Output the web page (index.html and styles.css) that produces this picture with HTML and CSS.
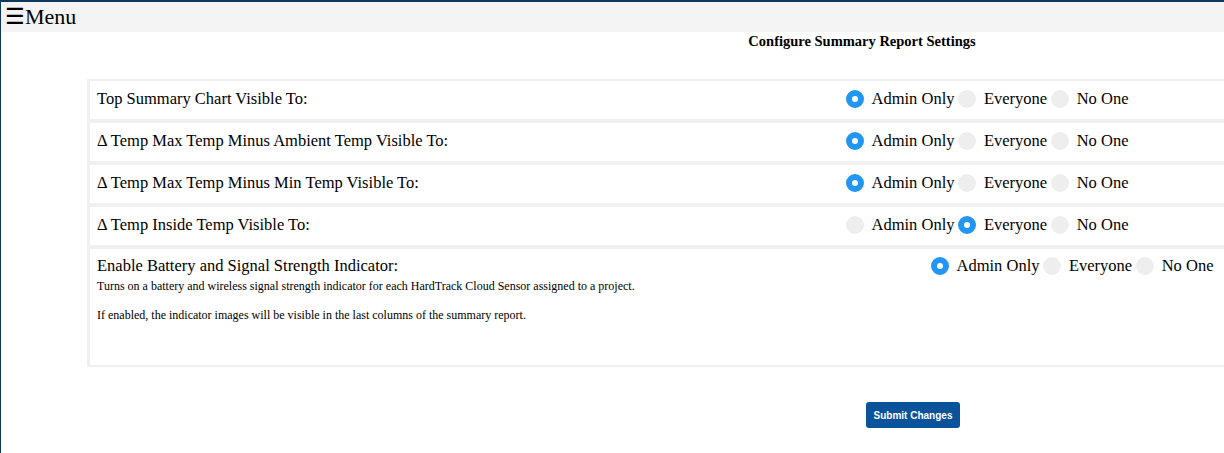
FILE: index.html
```html
<!DOCTYPE html>
<html>
<head>
<meta charset="utf-8">
<link rel="stylesheet" href="styles.css">
</head>
<body>
<div class="page">
  <div class="topbar"><span class="menu">☰Menu</span></div>
  <div class="content">
    <h3 class="title">Configure Summary Report Settings</h3>
    <div class="rows">
      <div class="row">
        <div class="label">Top Summary Chart Visible To:</div>
        <div class="opts">
          <span class="opt"><span class="dot on"></span>Admin Only</span>
          <span class="opt"><span class="dot"></span>Everyone</span>
          <span class="opt"><span class="dot"></span>No One</span>
        </div>
      </div>
      <div class="row">
        <div class="label">Δ Temp Max Temp Minus Ambient Temp Visible To:</div>
        <div class="opts">
          <span class="opt"><span class="dot on"></span>Admin Only</span>
          <span class="opt"><span class="dot"></span>Everyone</span>
          <span class="opt"><span class="dot"></span>No One</span>
        </div>
      </div>
      <div class="row">
        <div class="label">Δ Temp Max Temp Minus Min Temp Visible To:</div>
        <div class="opts">
          <span class="opt"><span class="dot on"></span>Admin Only</span>
          <span class="opt"><span class="dot"></span>Everyone</span>
          <span class="opt"><span class="dot"></span>No One</span>
        </div>
      </div>
      <div class="row">
        <div class="label">Δ Temp Inside Temp Visible To:</div>
        <div class="opts">
          <span class="opt"><span class="dot"></span>Admin Only</span>
          <span class="opt"><span class="dot on"></span>Everyone</span>
          <span class="opt"><span class="dot"></span>No One</span>
        </div>
      </div>
      <div class="row row-tall">
        <div class="label wide">
          <div>Enable Battery and Signal Strength Indicator:</div>
          <p class="desc">Turns on a battery and wireless signal strength indicator for each HardTrack Cloud Sensor assigned to a project.</p>
          <p class="desc">If enabled, the indicator images will be visible in the last columns of the summary report.</p>
        </div>
        <div class="opts">
          <span class="opt"><span class="dot on"></span>Admin Only</span>
          <span class="opt"><span class="dot"></span>Everyone</span>
          <span class="opt"><span class="dot"></span>No One</span>
        </div>
      </div>
    </div>
    <div class="actions">
      <button class="submit">Submit Changes</button>
    </div>
  </div>
</div>
</body>
</html>
```

FILE: styles.css
```css
html, body {
  margin: 0;
  padding: 0;
  overflow: hidden;
  background: #fff;
}
body {
  font-family: "Liberation Serif", "Times New Roman", serif;
  color: #000;
}
.page {
  border-top: 2px solid #0d3a5c;
  border-left: 1px solid #0d3a5c;
  height: 451px;
}
.topbar {
  background: #f4f4f4;
  height: 30px;
  display: flex;
  align-items: center;
  padding-left: 4px;
}
.menu {
  font-size: 22px;
  line-height: 30px;
}
.content {
  width: 1550px;
  margin-left: 86px;
}
.title {
  margin: 0;
  padding-top: 0;
  text-align: center;
  font-size: 14.5px;
  font-weight: bold;
  line-height: 18px;
}
.rows {
  margin-top: 29px;
}
.row {
  display: flex;
  align-items: center;
  height: 38px;
  box-sizing: content-box;
  border: 2px solid #f0f0f0;
  border-left-width: 3px;
  padding-left: 7px;
}
.row > .label,
.row > .opts {
  margin-bottom: 2px;
}
.label {
  font-size: 16.5px;
  width: 749px;
}
.opts {
  display: flex;
  align-items: center;
  font-size: 16.5px;
}
.opt {
  display: inline-flex;
  align-items: center;
  margin-right: 4px;
}
.dot {
  width: 18px;
  height: 18px;
  border-radius: 50%;
  background: #eeeeee;
  margin-right: 7.5px;
  box-sizing: border-box;
}
.dot.on {
  border: 6px solid #2196f3;
  background: #fff;
}
.row-tall {
  height: 116px;
  align-items: flex-start;
}
.row-tall .label {
  width: 834px;
  padding-top: 7px;
}
.row-tall .opts {
  padding-top: 7px;
}
.desc {
  font-size: 12px;
  margin: 3px 0 15px;
  line-height: 14px;
}
.actions {
  padding-top: 35px;
  padding-left: 779px;
}
.submit {
  background: #0a529a;
  color: #fff;
  border: none;
  border-radius: 3px;
  font-family: "Liberation Sans", Arial, sans-serif;
  font-weight: bold;
  font-size: 10px;
  height: 26px;
  width: 94px;
  padding: 0;
}
```
